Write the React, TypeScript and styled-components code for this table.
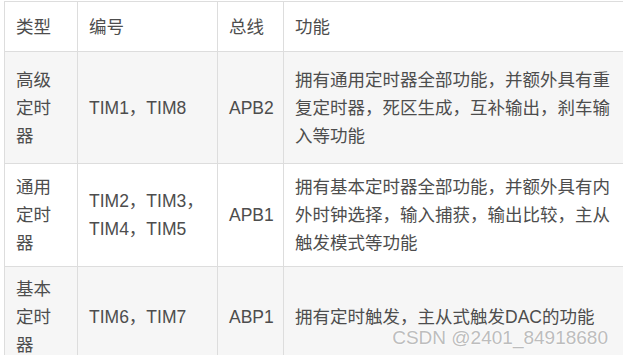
import React from 'react';
import styled, { createGlobalStyle } from 'styled-components';

const GlobalStyle = createGlobalStyle`
  html, body {
    margin: 0;
    padding: 0;
    overflow: hidden;
    background: #fff;
  }
`;

const Page = styled.div`
  position: relative;
  width: 623px;
  height: 355px;
  padding: 1px 0 0 4px;
  box-sizing: border-box;
  overflow: hidden;
  font-family: 'Liberation Sans', 'Noto Sans CJK SC', sans-serif;
`;

const Table = styled.table`
  width: 627px;
  table-layout: fixed;
  border-collapse: collapse;
  color: #4d4d4d;
  font-size: 17.5px;
  line-height: 28px;
`;

const Row = styled.tr<{ $shade?: boolean; $pad: number }>`
  background: ${p => (p.$shade ? '#f6f6f6' : '#fff')};

  & > td,
  & > th {
    padding: ${p => p.$pad}px 11px;
  }
`;

const HeadCell = styled.th`
  border: 1px solid #dddddd;
  text-align: left;
  font-weight: normal;
  vertical-align: middle;
`;

const Cell = styled.td`
  border: 1px solid #dddddd;
  vertical-align: middle;
`;

const Watermark = styled.div`
  position: absolute;
  right: 15px;
  top: 328px;
  font-family: 'Liberation Sans', Arial, sans-serif;
  font-size: 19px;
  line-height: 19px;
  color: #bdbdbd;
  text-shadow: 0 0 2px #fff, 0 0 2px #fff;
`;

const rows = [
  {
    type: '高级定时器',
    ids: 'TIM1，TIM8',
    bus: 'APB2',
    func: '拥有通用定时器全部功能，并额外具有重复定时器，死区生成，互补输出，刹车输入等功能',
    pad: 13.5,
  },
  {
    type: '通用定时器',
    ids: 'TIM2，TIM3，TIM4，TIM5',
    bus: 'APB1',
    func: '拥有基本定时器全部功能，并额外具有内外时钟选择，输入捕获，输出比较，主从触发模式等功能',
    pad: 9,
  },
  {
    type: '基本定时器',
    ids: 'TIM6，TIM7',
    bus: 'ABP1',
    func: '拥有定时触发，主从式触发DAC的功能',
    pad: 8,
  },
];

function App() {
  return (
    <Page>
      <GlobalStyle />
      <Table>
        <colgroup>
          <col style={{ width: 73 }} />
          <col style={{ width: 140 }} />
          <col style={{ width: 66 }} />
          <col style={{ width: 348 }} />
        </colgroup>
        <thead>
          <Row $pad={10.5}>
            <HeadCell>类型</HeadCell>
            <HeadCell>编号</HeadCell>
            <HeadCell>总线</HeadCell>
            <HeadCell>功能</HeadCell>
          </Row>
        </thead>
        <tbody>
          {rows.map((r, i) => (
            <Row key={r.bus + i} $shade={i % 2 === 0} $pad={r.pad}>
              <Cell>{r.type}</Cell>
              <Cell>{r.ids}</Cell>
              <Cell>{r.bus}</Cell>
              <Cell>{r.func}</Cell>
            </Row>
          ))}
        </tbody>
      </Table>
      <Watermark>CSDN @2401_84918680</Watermark>
    </Page>
  );
}

export default App;
